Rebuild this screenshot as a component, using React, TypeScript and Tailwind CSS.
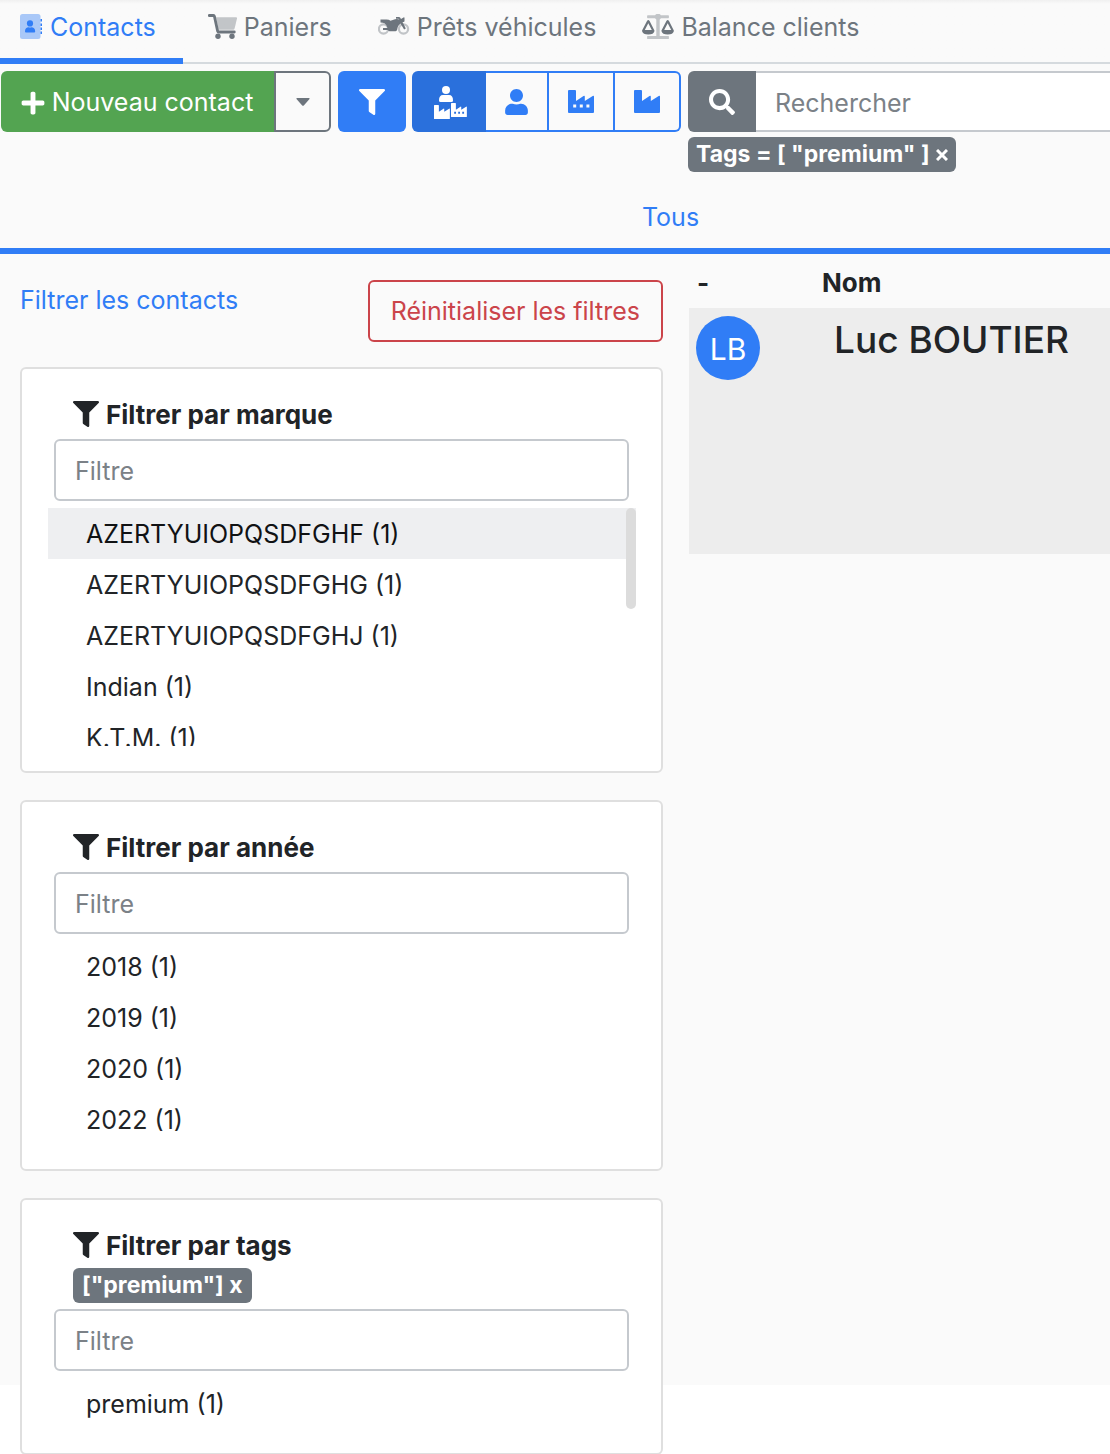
import React from "react";
import { FaFilter, FaPlus, FaSearch, FaUser } from "react-icons/fa";

function AddressBookIcon() {
  return (
    <svg className="h-[25px] w-[22px] shrink-0" viewBox="0 0 22 25" fill="currentColor" aria-hidden="true">
      <rect x="0" y="0" width="20.5" height="25" rx="2.5" opacity="0.4" />
      <circle cx="10" cy="9.4" r="3.1" />
      <path d="M5 17.2c0-2.4 1.6-3.9 3.6-3.9.6.3 2.2.3 2.8 0 2 0 3.8 1.500 3.800 3.900 0 .9-.5 1.300-1.200 1.300H6.200c-.7 0-1.200-.4-1.200-1.300z" />
      <path d="M20.500 5H22v2.500h-1.500zM20.500 9.500H22V12h-1.500zM20.500 13.500H22V16h-1.500zM20.500 17.500H22V20h-1.500z" />
    </svg>
  );
}

function CartIcon() {
  return (
    <svg className="h-[25px] w-[29px] shrink-0" viewBox="0 0 29 25" fill="currentColor" aria-hidden="true">
      <path opacity="0.4" d="M8 3.200h20q1.200 0 1 1.300l-2.500 10.300q-.3 1-1.300 1H10.600z" />
      <path
        d="M1.300 1.500h4.200q.7 0 .9.800l3.300 15q.2.700 1 .7h15.600"
        fill="none"
        stroke="currentColor"
        strokeWidth="2.800"
        strokeLinecap="round"
      />
      <circle cx="10" cy="22.200" r="2.700" />
      <circle cx="24" cy="22.200" r="2.700" />
    </svg>
  );
}

function MotorcycleIcon() {
  return (
    <svg className="h-[19px] w-8 shrink-0" viewBox="0 0 32 19" fill="currentColor" aria-hidden="true">
      <g fill="none" stroke="currentColor" strokeWidth="2.200" opacity="0.4">
        <circle cx="5.500" cy="12" r="4.600" />
        <circle cx="25.500" cy="12" r="4.600" />
      </g>
      <path d="M2.500 2.500H8.500q2.500 0 4 1.200L17 2.200q2.500-.5 4.500.3L20.300 1.700h-2.300V0h3q.7 0 1.100.6l.9 1.400L25.500 .5q1-.5 1 .5v3q0 1-1 1h-1l3.300 6.500-1.700 1L22.500 6.500q-2.500 2-3 4.500-.5 3.300-2 3.300H11.500q-1 0-1.500-1.300H5v-2h4.500Q9 8 6.500 6.300 5 5.400 2.500 5.400z" />
    </svg>
  );
}

function ScaleIcon() {
  return (
    <svg className="h-[25px] w-8 shrink-0" viewBox="0 0 32 25" fill="currentColor" aria-hidden="true">
      <path
        opacity="0.4"
        d="M5.700 1.300h7.400a3.400 3.400 0 0 1 5.800 0h7.400q.6 0 .6.600v1.700q0 .6-.6.600h-7.400q-.5.800-1.200 1.300v16.400h8.600q.6 0 .6.600v1.900q0 .6-.6.600H5.700q-.6 0-.6-.6v-1.900q0-.6.600-.6h8.600V5.500q-.7-.5-1.200-1.300H5.700q-.6 0-.6-.6V1.900q0-.6.600-.6z"
      />
      <path
        fillRule="evenodd"
        d="M5 7q1.300-2 2.600 0l4.700 9.200q.2.400.2.800-.8 3.500-6.200 3.500T0 17q0-.4.200-.8zM6.300 9.200 2.800 16h7z"
      />
      <path
        fillRule="evenodd"
        d="M24.400 7q1.300-2 2.600 0l4.700 9.200q.2.400.2.800-.8 3.500-6.200 3.500T19.400 17q0-.4.200-.8zM25.700 9.200 22.200 16h7z"
      />
    </svg>
  );
}

const FACTORY =
  "M0 1q0-1 1-1h6q1 0 1 1v10l7.500-4.900q1.300-.8 1.300.6V11l7.900-4.900q1.300-.8 1.300.6V22q0 1-1 1H1q-1 0-1-1z";
const FACTORY_WINDOWS = "M5.200 14.500h3v3h-3zM11.800 14.500h3v3h-3zM18.400 14.500h3v3h-3z";

function FactoryIcon({ windows = false }: { windows?: boolean }) {
  return (
    <svg className="h-[23px] w-[26px]" viewBox="0 0 26 23" fill="currentColor" fillRule="evenodd" aria-hidden="true">
      <path d={windows ? FACTORY + FACTORY_WINDOWS : FACTORY} />
    </svg>
  );
}

function AllContactsIcon() {
  return (
    <svg className="h-[33px] w-[33px]" viewBox="0 0 33 33" fill="currentColor" fillRule="evenodd" aria-hidden="true">
      <circle cx="12" cy="4" r="4" />
      <path d="M5 14.500q0-5.500 4-5.500h6q4 0 4 5.500 0 1.500-1.500 1.500h-11Q5 16 5 14.500z" />
      <g transform="translate(0 19) scale(0.610)">
        <path d={FACTORY} />
      </g>
      <g transform="translate(17 17) scale(0.610)">
        <path d={FACTORY + FACTORY_WINDOWS} />
      </g>
    </svg>
  );
}

function Tab({ icon, label, active = false }: { icon: React.ReactNode; label: string; active?: boolean }) {
  return (
    <a
      href="#"
      aria-current={active ? "page" : undefined}
      className={
        active
          ? "-mb-0.5 flex h-16 items-start gap-2 border-b-6 border-[#307df6] pt-2 pr-[27px] pl-5 text-[#307df6]"
          : "flex h-[62px] items-start gap-[7px] pt-2 pr-[21px] pl-[25px] text-[#6d757d]"
      }
    >
      <span className="flex h-9 items-center">{icon}</span>
      <span className="leading-[38px] whitespace-nowrap">{label}</span>
    </a>
  );
}

function FilterCard({
  title,
  items,
  tag,
  scroll = false,
}: {
  title: string;
  items: string[];
  tag?: string;
  scroll?: boolean;
}) {
  return (
    <section className="rounded-md border-2 border-[#dfdfdf] bg-white pt-[26px] pb-6">
      <h2 className="ml-[51px] flex h-[38px] items-center gap-[7px] text-[26px] font-bold">
        <FaFilter className="size-[26px]" />
        {title}
      </h2>
      {tag && (
        <div className="ml-[51px] flex pt-1">
          <button className="h-[35px] rounded-md bg-[#6d757d] px-[9px] text-[23px] leading-[35px] font-bold text-white">
            {tag} x
          </button>
        </div>
      )}
      <div className="mx-8 mt-1.5">
        <input
          type="text"
          aria-label={title}
          placeholder="Filtre"
          className="h-[62px] w-full rounded-md border-2 border-[#c5c9ce] bg-white px-[19px] pt-0.5 placeholder:text-[#7b8187]"
        />
      </div>
      <div
        className={
          scroll ? "relative mt-[7px] mr-[25px] mb-px ml-[26px] h-[238px] overflow-hidden" : "mx-[26px] mt-[7px]"
        }
      >
        <ul>
          {items.map((item, i) => (
            <li key={item}>
              <button
                className={
                  scroll && i === 0
                    ? "block h-[51px] w-full bg-[#eeeff1] pt-0.5 pl-[38px] text-left text-[#101214]"
                    : "block h-[51px] w-full pt-0.5 pl-[38px] text-left"
                }
              >
                {item}
              </button>
            </li>
          ))}
        </ul>
        {scroll && <div className="absolute top-0 right-0 h-[101px] w-[10px] rounded-full bg-[#dcdcdc]" />}
      </div>
    </section>
  );
}

export default function App() {
  return (
    <div className="bg-[linear-gradient(#fafafa,#fafafa)] bg-[length:100%_calc(100%-70px)] bg-no-repeat font-[Inter,sans-serif] text-[25px] text-[#212427]">
      <nav className="flex items-start border-b-2 border-[#d5dade] bg-linear-to-b from-[#f0f0f0] to-[#fafafa] to-[4px]">
        <Tab active icon={<AddressBookIcon />} label="Contacts" />
        <Tab icon={<CartIcon />} label="Paniers" />
        <Tab icon={<MotorcycleIcon />} label="Prêts véhicules" />
        <Tab icon={<ScaleIcon />} label="Balance clients" />
      </nav>

      <div className="flex items-start pt-[7px] pl-px">
        <div className="flex h-[61px] shrink-0">
          <button className="flex w-[273px] items-center justify-center gap-[6px] rounded-l-md bg-[#53a451] pt-0.5 pr-0.5 whitespace-nowrap text-white">
            <FaPlus className="size-[26px]" />
            Nouveau contact
          </button>
          <button
            aria-label="Plus d'options"
            className="flex w-[57px] items-center justify-center rounded-r-md border-2 border-[#6d757d] text-[#6d757d]"
          >
            <svg className="h-2 w-[14px]" viewBox="0 0 14 8" fill="currentColor" aria-hidden="true">
              <path d="M1 0h12q1 0 .5 1L8 7.300q-1 1-2 0L.5 1Q0 0 1 0z" />
            </svg>
          </button>
        </div>
        <button
          aria-label="Filtrer"
          className="ml-[7px] flex h-[61px] w-[68px] shrink-0 items-center justify-center rounded-md bg-[#307df6] text-white"
        >
          <FaFilter className="size-[26px]" />
        </button>
        <div className="ml-[6px] flex h-[61px] shrink-0 text-[#307df6]">
          <button
            aria-label="Tous les contacts"
            className="flex w-[74px] items-center justify-center rounded-l-md bg-[#2a70dc] pt-0.5 pl-0.5 text-white"
          >
            <AllContactsIcon />
          </button>
          <button aria-label="Particuliers" className="flex w-[63px] items-center justify-center border-2 border-l-0 border-[#307df6]">
            <FaUser className="h-[26px] w-[23px]" />
          </button>
          <button aria-label="Entreprises" className="flex w-[66px] items-center justify-center border-2 border-l-0 border-[#307df6]">
            <FactoryIcon windows />
          </button>
          <button
            aria-label="Sociétés"
            className="flex w-[66px] items-center justify-center rounded-r-md border-2 border-l-0 border-[#307df6]"
          >
            <FactoryIcon />
          </button>
        </div>
        <div className="ml-[7px] min-w-0 flex-1">
          <div className="flex h-[61px]">
            <button
              aria-label="Lancer la recherche"
              className="flex w-[68px] shrink-0 items-center justify-center rounded-l-md bg-[#6d757d] text-white"
            >
              <FaSearch className="size-[26px]" />
            </button>
            <input
              type="search"
              aria-label="Rechercher"
              placeholder="Rechercher"
              className="min-w-0 flex-1 border-y-2 border-[#c5c9ce] bg-white px-[19px] pt-1 placeholder:text-[#7b8187]"
            />
          </div>
          <button className="mt-[5px] flex h-[35px] items-center gap-[6px] rounded-md bg-[#6d757d] px-2 text-[23px] leading-[35px] font-bold whitespace-nowrap text-white">
            Tags = [ "premium" ]
            <svg className="size-3" viewBox="0 0 12 12" fill="none" stroke="currentColor" strokeWidth="3" aria-hidden="true">
              <path d="M1 1l10 10M11 1L1 11" />
            </svg>
          </button>
        </div>
      </div>

      <div className="mt-[26px] flex h-14 justify-center border-b-6 border-[#307df6] pl-[231px]">
        <a href="#" className="leading-[38px] text-[#307df6]">
          Tous
        </a>
      </div>

      <div className="grid grid-cols-[663fr_421fr] items-start gap-[26px]">
        <aside className="pt-[26px] pl-5">
          <div className="flex items-start justify-between">
            <a href="#" className="leading-10 text-[#307df6]">
              Filtrer les contacts
            </a>
            <button className="h-[62px] rounded-md border-2 border-[#cb444a] px-[21px] pt-0.5 whitespace-nowrap text-[#cb444a]">
              Réinitialiser les filtres
            </button>
          </div>
          <div className="mt-[25px] flex flex-col gap-[27px]">
            <FilterCard
              scroll
              title="Filtrer par marque"
              items={[
                "AZERTYUIOPQSDFGHF (1)",
                "AZERTYUIOPQSDFGHG (1)",
                "AZERTYUIOPQSDFGHJ (1)",
                "Indian (1)",
                "K.T.M. (1)",
              ]}
            />
            <FilterCard title="Filtrer par année" items={["2018 (1)", "2019 (1)", "2020 (1)", "2022 (1)"]} />
            <FilterCard title="Filtrer par tags" tag={'["premium"]'} items={["premium (1)"]} />
          </div>
        </aside>

        <table className="w-full table-fixed border-collapse text-left">
          <thead>
            <tr className="h-[54px] text-[26px]">
              <th className="w-[125px] pt-0.5 pl-2">-</th>
              <th className="pt-0.5 pl-2">Nom</th>
            </tr>
          </thead>
          <tbody>
            <tr className="h-[246px] bg-[#ededed] align-top">
              <td className="pt-2 pl-[7px]">
                <span className="flex size-16 items-center justify-center rounded-full bg-[#307df6] pt-0.5 text-[30px] text-white">
                  LB
                </span>
              </td>
              <td className="pt-2 pl-5 text-[37px] leading-[48px] font-medium whitespace-nowrap">Luc BOUTIER</td>
            </tr>
          </tbody>
        </table>
      </div>
    </div>
  );
}
